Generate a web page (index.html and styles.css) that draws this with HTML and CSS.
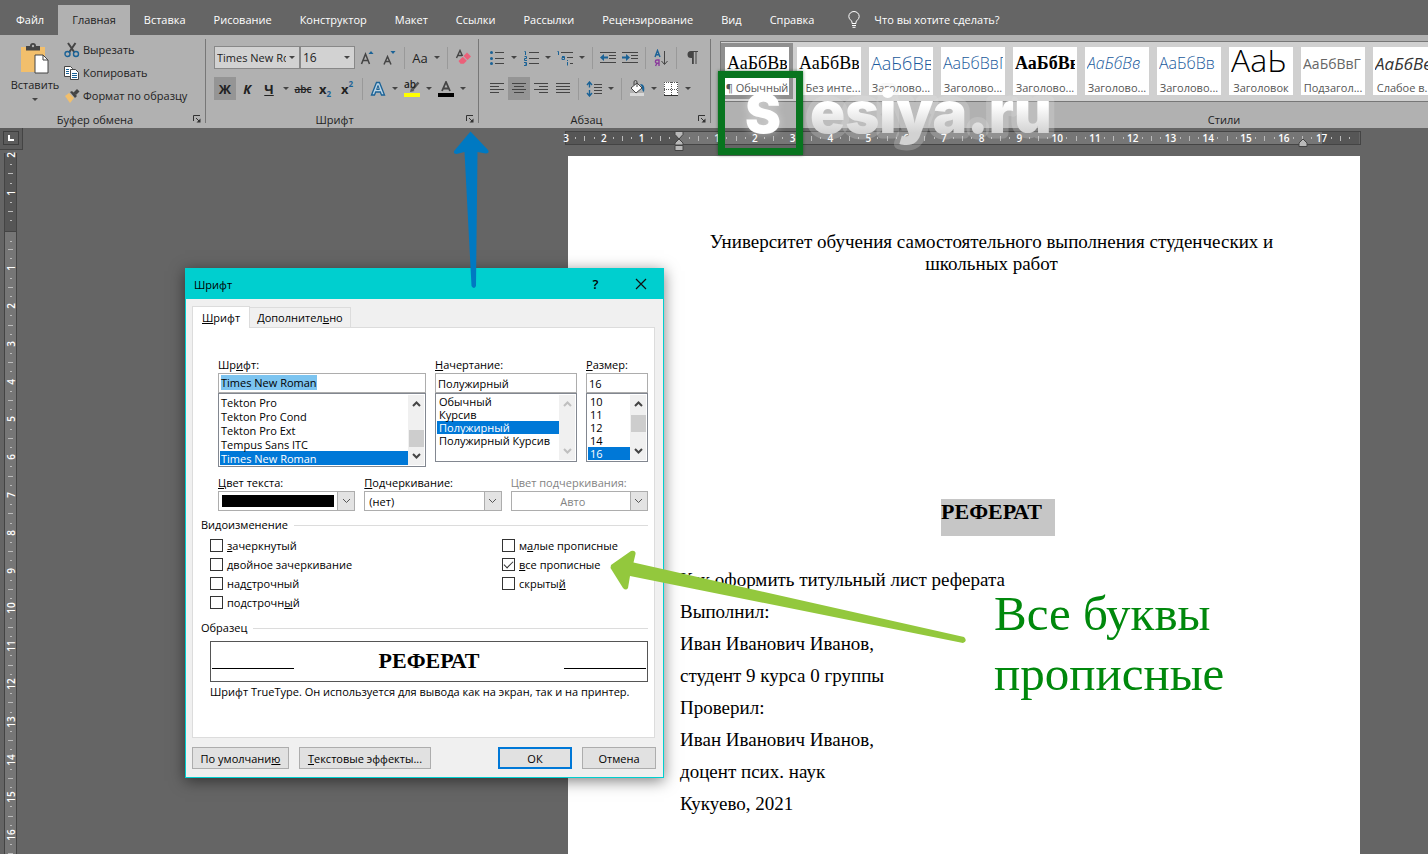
FILE: index.html
```html
<!DOCTYPE html>
<html lang="ru">
<head>
  <meta charset="UTF-8" />
  <meta name="viewport" content="width=device-width, initial-scale=1.0"/>
  <title>Реферат - Word</title>
  <link rel="stylesheet" href="styles.css">
</head>
<body>

  <nav class="tabs">
    <a href="#">Файл</a>
    <a href="#" class="active">Главная</a>
    <a href="#">Вставка</a>
    <a href="#">Рисование</a>
    <a href="#">Конструктор</a>
    <a href="#">Макет</a>
    <a href="#">Ссылки</a>
    <a href="#">Рассылки</a>
    <a href="#">Рецензирование</a>
    <a href="#">Вид</a>
    <a href="#">Справка</a>
    <a href="#" class="tell-me">
      <svg width="12" height="17" viewBox="0 0 12 17" fill="none" stroke="#fff"><path d="M4 12.500V11C4 9.500 .8 8.500 .8 5.500a5.200 5 0 0 1 10.400 0C11.200 8.500 8 9.500 8 11v1.500zM4 14.500h4M4.500 16.300h3"/></svg>
      Что вы хотите сделать?
    </a>
  </nav>

  <div class="ribbon">
    <!-- Clipboard -->
    <section class="group clipboard">
      <div class="group-body">
        <button class="paste">
          <svg width="30" height="32" viewBox="0 0 30 32"><path d="M1 4h24v25H1z" fill="#f2bf6c"/><path d="M6 3h4a3 3 0 0 1 6 0h4v4.500H6z" fill="#444"/><circle cx="13" cy="3" r="1.200" fill="#b1b1b1"/><path d="M15 12h8l5 5v13H15z" fill="#fff" stroke="#444"/><path d="M23 12v5h5" fill="none" stroke="#444"/></svg>
          <span>Вставить</span>
          <i class="caret"></i>
        </button>
        <div class="clip-actions">
          <button>
            <svg width="16" height="16" viewBox="0 0 16 16" fill="none"><path d="M4 1l6.500 9.500M11.500 1L5 10.500" stroke="#444" stroke-width="2"/><circle cx="3.500" cy="12" r="2.500" stroke="#1a6296" stroke-width="1.400"/><circle cx="12" cy="12" r="2.500" stroke="#1a6296" stroke-width="1.400"/></svg>
            Вырезать
          </button>
          <button>
            <svg width="16" height="16" viewBox="0 0 16 16" stroke="#444" fill="#fff"><path d="M.5 1.500h6l2 2v8h-8z"/><path d="M6.500 4.500h5l3 3v7h-8z"/><path d="M2 4.500h3M2 6.500h3M2 8.500h3M8 8.500h5M8 10.500h5M8 12.500h5" stroke="#1a6296"/></svg>
            Копировать
          </button>
          <button>
            <svg width="16" height="16" viewBox="0 0 16 16"><path d="M5 5l5 5-4 5-5-7z" fill="#f2bf6c"/><path d="M6 4l2-1 5 5-2 2z" fill="#444"/><path d="M9 5l4-4 2.500 2.500L12 7z" fill="#444"/></svg>
            Формат по образцу
          </button>
        </div>
      </div>
      <div class="group-label">Буфер обмена
        <button class="launcher" aria-label="Буфер обмена"><svg width="8" height="8" viewBox="0 0 8 8" fill="none" stroke="#333"><path d="M.5 6V.5H7M3 3l3 3"/><path d="M7.500 3.500v4h-4z" fill="#333" stroke="none"/></svg></button>
      </div>
    </section>

    <!-- Font -->
    <section class="group font">
      <div class="tool-row">
        <div class="box box-name"><select aria-label="Имя шрифта"><option>Times New Roman</option></select><i class="caret"></i></div>
        <div class="box box-size"><select aria-label="Кегль"><option>16</option></select><i class="caret"></i></div>
        <button class="tool" aria-label="Увеличить размер"><svg width="16" height="18" viewBox="0 0 16 18"><path d="M2.500 15L6.500 5l4 10M4 11.500h5" fill="none" stroke="#444" stroke-width="1.500"/><path d="M9.500 5L12 2l2.500 3z" fill="#1a6296"/></svg></button>
        <button class="tool" aria-label="Уменьшить размер"><svg width="16" height="18" viewBox="0 0 16 18"><path d="M3 15.500l3.500-8 3.500 8M4.500 12.500h4" fill="none" stroke="#444" stroke-width="1.500"/><path d="M9.500 2h5L12 5z" fill="#1a6296"/></svg></button>
        <i class="sep"></i>
        <button class="tool case">Aa</button>
        <button class="drop" aria-label="Регистр"><i class="caret"></i></button>
        <i class="sep"></i>
        <button class="tool" aria-label="Удалить форматирование"><svg width="16" height="17" viewBox="0 0 16 17"><path d="M1.500 9L5 1.500 7.500 7M3 6.500h4" fill="none" stroke="#444" stroke-width="1.400"/><path d="M8.500 7L12 3.500l4 4-3.500 3.500z" fill="#eb6079"/><path d="M7.800 7.800l4 4-3 3H5.500L3.500 12z" fill="#eb6079"/></svg></button>
      </div>
      <div class="tool-row">
        <button class="tool on bold">Ж</button>
        <button class="tool italic">К</button>
        <button class="tool under">Ч</button>
        <button class="drop" aria-label="Подчеркнутый"><i class="caret"></i></button>
        <button class="tool strike">abc</button>
        <button class="tool script">x<sub>2</sub></button>
        <button class="tool script">x<sup>2</sup></button>
        <i class="sep"></i>
        <button class="tool" aria-label="Текстовые эффекты"><svg width="16" height="16" viewBox="0 0 16 16"><path d="M1.500 14L6.500 1.500h3l5 12.500h-3l-1.200-3H5.700L4.500 14z" fill="#b9d3e4" stroke="#1a6296" stroke-width="1.300"/><path d="M6.600 8.500L8 4.500l1.400 4z" fill="#b1b1b1" stroke="#1a6296"/></svg></button>
        <button class="drop" aria-label="Эффекты"><i class="caret"></i></button>
        <button class="tool marker" aria-label="Цвет выделения"><span>ab</span><svg width="16" height="16" viewBox="0 0 16 16"><path d="M0 12h16v4H0z" fill="#ff0"/><path d="M14.500 1.500l-6 7" stroke="#555" stroke-width="2.500"/><path d="M6 11l1-4 3.500 3z" fill="#555"/></svg></button>
        <button class="drop" aria-label="Выделение"><i class="caret"></i></button>
        <button class="tool" aria-label="Цвет шрифта"><svg width="16" height="16" viewBox="0 0 16 16"><path d="M4 10L8 1l4 9M5.500 7.500h5" fill="none" stroke="#444" stroke-width="1.800"/><path d="M0 12h16v4H0z"/></svg></button>
        <button class="drop" aria-label="Цвет"><i class="caret"></i></button>
      </div>
      <div class="group-label">Шрифт
        <button class="launcher" aria-label="Шрифт"><svg width="8" height="8" viewBox="0 0 8 8" fill="none" stroke="#333"><path d="M.5 6V.5H7M3 3l3 3"/><path d="M7.500 3.500v4h-4z" fill="#333" stroke="none"/></svg></button>
      </div>
    </section>

    <!-- Paragraph -->
    <section class="group paragraph">
      <div class="tool-row">
        <button class="tool" aria-label="Маркеры"><svg width="16" height="16" viewBox="0 0 16 16"><path d="M6 2.500h9M6 8.500h9M6 13.500h9" stroke="#444"/><circle cx="2.500" cy="2.500" r="1.500" fill="#1a6296"/><circle cx="2.500" cy="8.500" r="1.500" fill="#1a6296"/><circle cx="2.500" cy="13.500" r="1.500" fill="#1a6296"/></svg></button>
        <button class="drop" aria-label="Библиотека маркеров"><i class="caret"></i></button>
        <button class="tool" aria-label="Нумерация"><svg width="16" height="16" viewBox="0 0 16 16" fill="none"><path d="M6 2.500h10M6 8.500h10M6 13.500h10" stroke="#444"/><path d="M1.500 1.500h1V5M1.500 6.500h2v2h-2v2h2.500M1 12.500h2.500v3H1M2 14h1.500" stroke="#1a6296"/></svg></button>
        <button class="drop" aria-label="Формат номера"><i class="caret"></i></button>
        <button class="tool" aria-label="Многоуровневый список"><svg width="16" height="16" viewBox="0 0 16 16" fill="none"><path d="M4 2.500h12M10 7.500h6M13 13.500h3" stroke="#444"/><path d="M.5 1.500h1V5M5 6.500h2.500v3H5v-2h2M10.500 12v3.500M10.500 10v1" stroke="#1a6296"/></svg></button>
        <button class="drop" aria-label="Уровни списка"><i class="caret"></i></button>
        <i class="sep"></i>
        <button class="tool" aria-label="Уменьшить отступ"><svg width="16" height="16" viewBox="0 0 16 16"><path d="M0 2.500h16M9 5.500h7M9 8.500h7M0 12.500h16" stroke="#444"/><path d="M0 7.500L4 4v2.500h4v2H4V11z" fill="#1a6296"/></svg></button>
        <button class="tool" aria-label="Увеличить отступ"><svg width="16" height="16" viewBox="0 0 16 16"><path d="M0 2.500h16M9 5.500h7M9 8.500h7M0 12.500h16" stroke="#444"/><path d="M8 7.500L4 4v2.500H0v2h4V11z" fill="#1a6296"/></svg></button>
        <i class="sep"></i>
        <button class="tool" aria-label="Сортировка"><svg width="16" height="18" viewBox="0 0 16 18" fill="none"><path d="M2 8l2.500-6.500L7 8M3 5.800h3" stroke="#1a6296" stroke-width="1.400"/><path d="M6 17v-6H4a1.500 1.500 0 0 0 0 3.200h2M4.200 14L2.500 17" stroke="#8a3a9c" stroke-width="1.400"/><path d="M11.500 2v13M8.500 12l3 3.500 3-3.500" stroke="#444"/></svg></button>
        <i class="sep"></i>
        <button class="tool" aria-label="Отобразить все знаки"><svg width="14" height="15" viewBox="0 0 14 15"><path d="M7 8H6a3.500 3.500 0 0 1 0-7h7v1h-1.500v12h-1V2h-1.700v12H7z" fill="#444"/></svg></button>
      </div>
      <div class="tool-row">
        <button class="tool" aria-label="По левому краю"><svg width="16" height="14" viewBox="0 0 16 14" stroke="#444"><path d="M1 1.500h14M1 4.500h9M1 7.500h14M1 10.500h9"/></svg></button>
        <button class="tool on" aria-label="По центру"><svg width="16" height="14" viewBox="0 0 16 14" stroke="#444"><path d="M1 1.500h14M3 4.500h10M1 7.500h14M3 10.500h10"/></svg></button>
        <button class="tool" aria-label="По правому краю"><svg width="16" height="14" viewBox="0 0 16 14" stroke="#444"><path d="M1 1.500h14M6 4.500h9M1 7.500h14M6 10.500h9"/></svg></button>
        <button class="tool" aria-label="По ширине"><svg width="16" height="14" viewBox="0 0 16 14" stroke="#444"><path d="M1 1.500h14M1 4.500h14M1 7.500h14M1 10.500h14"/></svg></button>
        <i class="sep"></i>
        <button class="tool" aria-label="Интервал"><svg width="16" height="16" viewBox="0 0 16 16" fill="none"><path d="M8 3.500h8M8 6.500h8M8 9.500h8M8 12.500h8" stroke="#444"/><path d="M3.500 1.500v5M1 4l2.500-3L6 4M3.500 9v5M1 12l2.500 3L6 12" stroke="#1a6296" stroke-width="1.400"/></svg></button>
        <button class="drop" aria-label="Междустрочный интервал"><i class="caret"></i></button>
        <i class="sep"></i>
        <button class="tool" aria-label="Заливка"><svg width="18" height="17" viewBox="0 0 18 17"><path d="M2 13h14v3H2z" fill="#d9d9d9"/><path d="M3 8l6-5 5 5-6 5z" fill="#fff" stroke="#444"/><path d="M6 5V2a1.500 1.500 0 0 1 3 0v5" fill="none" stroke="#444"/><path d="M12 4c4 0 5 3 4 8-2-1-2-3-2-5z" fill="#1a6296"/></svg></button>
        <button class="drop" aria-label="Цвет заливки"><i class="caret"></i></button>
        <button class="tool" aria-label="Границы"><svg width="14" height="14" viewBox="0 0 14 14"><path d="M0 0h14v14H0z" fill="#fff"/><path d="M0 .5h14M0 7.500h14M.5 0v14M7.500 0v14M13.500 0v12" stroke="#555" stroke-dasharray="1 1" fill="none"/><path d="M0 13.500h14" stroke="#333"/></svg></button>
        <button class="drop" aria-label="Виды границ"><i class="caret"></i></button>
      </div>
      <div class="group-label">Абзац
        <button class="launcher" aria-label="Абзац"><svg width="8" height="8" viewBox="0 0 8 8" fill="none" stroke="#333"><path d="M.5 6V.5H7M3 3l3 3"/><path d="M7.500 3.500v4h-4z" fill="#333" stroke="none"/></svg></button>
      </div>
    </section>

    <!-- Styles -->
    <section class="group styles">
      <div class="gallery">
        <button class="style selected"><span class="sample serif">АаБбВв</span><span class="name">¶ Обычный</span></button>
        <button class="style"><span class="sample serif">АаБбВв</span><span class="name shifted">Без инте...</span></button>
        <button class="style"><span class="sample light large">АаБбВв</span><span class="name">Заголово...</span></button>
        <button class="style"><span class="sample light">АаБбВвГ</span><span class="name">Заголово...</span></button>
        <button class="style"><span class="sample serif heavy">АаБбВв</span><span class="name">Заголово...</span></button>
        <button class="style"><span class="sample light slanted">АаБбВв</span><span class="name">Заголово...</span></button>
        <button class="style"><span class="sample light">АаБбВв</span><span class="name">Заголово...</span></button>
        <button class="style"><span class="sample title">АаЬ</span><span class="name">Заголовок</span></button>
        <button class="style"><span class="sample subtitle">АаБбВвГ</span><span class="name">Подзагол...</span></button>
        <button class="style"><span class="sample slanted weak">АаБбВв</span><span class="name">Слабое в...</span></button>
      </div>
      <div class="group-label">Стили</div>
    </section>
  </div>

  <main class="workspace">
    <div class="side">
      <div class="corner"><span><svg width="6" height="6" viewBox="0 0 6 6"><path d="M0 0h2v4h4v2H0z" fill="#fff"/></svg></span></div>
      <div class="v-ruler">
        <span><b>2</b></span><span><b>1</b></span><span class="zero"></span><span><b>1</b></span><span><b>2</b></span><span><b>3</b></span><span><b>4</b></span><span><b>5</b></span><span><b>6</b></span><span><b>7</b></span><span><b>8</b></span><span><b>9</b></span><span><b>10</b></span><span><b>11</b></span><span><b>12</b></span><span><b>13</b></span><span><b>14</b></span><span><b>15</b></span><span><b>16</b></span>
      </div>
    </div>

    <div class="canvas">
      <div class="h-ruler">
        <span><b>3</b></span><span><b>2</b></span><span><b>1</b></span><span><svg class="indent" width="10" height="22" viewBox="0 0 10 22" fill="#b9b9b9" stroke="#444"><path d="M1 1.500h8v3L5 9 1 4.500zM5 9l4 4v2H1v-2zM1 15.500h8v5H1z"/></svg></span><span><b>1</b></span><span><b>2</b></span><span><b>3</b></span><span><b>4</b></span><span><b>5</b></span><span><b>6</b></span><span><b>7</b></span><span><b>8</b></span><span><b>9</b></span><span><b>10</b></span><span><b>11</b></span><span><b>12</b></span><span><b>13</b></span><span><b>14</b></span><span><b>15</b></span><span><b>16</b><svg class="indent-right" width="10" height="9" viewBox="0 0 10 9"><path d="M5 1l4 4v3.500H1V5z" fill="#b9b9b9" stroke="#444"/></svg></span><span><b>17</b></span>
      </div>
      <article class="page">
        <p class="center">Университет обучения самостоятельного выполнения студенческих и школьных работ</p>
        <h1><mark>РЕФЕРАТ</mark></h1>
        <p>Как оформить титульный лист реферата</p>
        <p>Выполнил:</p>
        <p>Иван Иванович Иванов,</p>
        <p>студент 9 курса 0 группы</p>
        <p>Проверил:</p>
        <p>Иван Иванович Иванов,</p>
        <p>доцент псих. наук</p>
        <p>Кукуево, 2021</p>
      </article>
    </div>

    <!-- Font dialog -->
    <div class="dialog" role="dialog" aria-labelledby="dialog-title">
      <div class="title-bar">
        <span id="dialog-title">Шрифт</span>
        <button class="help">?</button>
        <button aria-label="Закрыть"><svg width="12" height="12" viewBox="0 0 12 12" stroke="#111" stroke-width="1.200"><path d="M1 1l10 10M11 1L1 11"/></svg></button>
      </div>
      <div class="dialog-tabs">
        <button class="current"><u>Ш</u>рифт</button>
        <button>Дополнител<u>ь</u>но</button>
      </div>
      <div class="panel">
        <div class="indented pickers">
          <div class="picker">
            <label for="f-name">Шр<u>и</u>фт:</label>
            <div class="field"><mark>Times New Roman</mark></div>
            <div class="list tall">
              <select id="f-name" size="5">
                <option>Tekton Pro</option>
                <option>Tekton Pro Cond</option>
                <option>Tekton Pro Ext</option>
                <option>Tempus Sans ITC</option>
                <option selected>Times New Roman</option>
              </select>
              <div class="scroll low"><svg width="9" height="6" viewBox="0 0 9 6"><path d="M1 5l3.500-3.500L8 5"/></svg><i></i><svg width="9" height="6" viewBox="0 0 9 6"><path d="M1 1l3.500 3.500L8 1"/></svg></div>
            </div>
          </div>
          <div class="picker">
            <label for="f-style"><u>Н</u>ачертание:</label>
            <input class="field" type="text" value="Полужирный" aria-label="Начертание">
            <div class="list">
              <select id="f-style" size="5">
                <option>Обычный</option>
                <option>Курсив</option>
                <option selected>Полужирный</option>
                <option>Полужирный Курсив</option>
              </select>
              <div class="scroll off"><svg width="9" height="6" viewBox="0 0 9 6"><path d="M1 5l3.500-3.500L8 5"/></svg><svg width="9" height="6" viewBox="0 0 9 6"><path d="M1 1l3.500 3.500L8 1"/></svg></div>
            </div>
          </div>
          <div class="picker">
            <label for="f-size"><u>Р</u>азмер:</label>
            <input class="field" type="text" value="16" aria-label="Размер">
            <div class="list">
              <select id="f-size" size="5">
                <option>10</option>
                <option>11</option>
                <option>12</option>
                <option>14</option>
                <option selected>16</option>
              </select>
              <div class="scroll high"><svg width="9" height="6" viewBox="0 0 9 6"><path d="M1 5l3.500-3.500L8 5"/></svg><i></i><svg width="9" height="6" viewBox="0 0 9 6"><path d="M1 1l3.500 3.500L8 1"/></svg></div>
            </div>
          </div>
        </div>

        <div class="indented combos">
          <div class="picker">
            <label for="c-color"><u>Ц</u>вет текста:</label>
            <div class="combo"><select id="c-color" class="swatch"><option label=" "></option></select><span class="arrow"><svg width="9" height="6" viewBox="0 0 9 6"><path d="M1 1l3.500 3.500L8 1"/></svg></span></div>
          </div>
          <div class="picker">
            <label for="c-under"><u>П</u>одчеркивание:</label>
            <div class="combo"><select id="c-under"><option>(нет)</option></select><span class="arrow"><svg width="9" height="6" viewBox="0 0 9 6"><path d="M1 1l3.500 3.500L8 1"/></svg></span></div>
          </div>
          <div class="picker disabled">
            <label for="c-ucolor">Цвет подчеркивания:</label>
            <div class="combo"><select id="c-ucolor" disabled><option>Авто</option></select><span class="arrow"><svg width="9" height="6" viewBox="0 0 9 6"><path d="M1 1l3.500 3.500L8 1"/></svg></span></div>
          </div>
        </div>

        <h2>Видоизменение</h2>
        <div class="effects">
          <label><input type="checkbox"><span><u>з</u>ачеркнутый</span></label>
          <label><input type="checkbox"><span>м<u>а</u>лые прописные</span></label>
          <label><input type="checkbox"><span><u>д</u>войное зачеркивание</span></label>
          <label><input type="checkbox" checked><span><u>в</u>се прописные</span></label>
          <label><input type="checkbox"><span>над<u>с</u>трочный</span></label>
          <label><input type="checkbox"><span>скрыты<u>й</u></span></label>
          <label><input type="checkbox"><span>подстрочн<u>ы</u>й</span></label>
        </div>

        <h2 class="second">Образец</h2>
        <div class="preview"><i></i><b>РЕФЕРАТ</b><i></i></div>
        <p class="hint">Шрифт TrueType. Он используется для вывода как на экран, так и на принтер.</p>
      </div>
      <div class="dialog-buttons">
        <button class="w-default">По умолчани<u>ю</u></button>
        <button class="w-effects"><u>Т</u>екстовые эффекты...</button>
        <button class="w-ok">ОК</button>
        <button class="w-cancel">Отмена</button>
      </div>
    </div>

    <!-- Callouts over the document -->
    <svg class="arrow-blue" width="40" height="162" viewBox="0 0 40 162"><path d="M18.500 2.500L36 21q2 3-2 3.500L25.500 23 24 157q-2 4-4.500 0L12.500 23 4.500 25q-4-.5-2-3.500z" fill="#0079c2"/></svg>
    <svg class="arrow-green" width="362" height="106" viewBox="0 0 362 106"><path d="M3 25L23 11q5-1 4.500 3L25.500 22.500 356 97q4 4-1 6L22 36 20 48q-2 3-5 0L2.500 28z" fill="#93c83d"/></svg>
    <p class="callout">Все буквы<br>прописные</p>
  </main>

  <div class="watermark">
    <div class="frame">S</div>
    <svg width="270" height="80" viewBox="0 0 270 80">
      <defs><linearGradient id="silver" x1="0" y1="0" x2="0" y2="1"><stop offset="0.400" stop-color="#fff"/><stop offset="0.800" stop-color="#d2d2d2"/></linearGradient></defs>
      <text x="7" y="50" fill="url(#silver)">esiya.ru</text>
    </svg>
  </div>

</body>
</html>
```
FILE: styles.css
```css
* {
  margin: 0;
  padding: 0;
  box-sizing: border-box;
}
body {
  height: 100vh;
  display: flex;
  flex-direction: column;
  overflow: hidden;
  position: relative;
  background: #656565;
  color: #222;
  font-family: "Open Sans", "Noto Sans", sans-serif;
  font-size: 11px;
}
button, select, input {
  font: inherit;
  color: inherit;
  background: none;
  border: none;
  border-radius: 0;
  outline: none;
}
svg {
  display: block;
  flex: none;
}

/* tabs */
.tabs {
  display: flex;
  height: 35px;
  padding: 5px 0 0 2px;
  flex: none;
}
.tabs a {
  display: flex;
  align-items: center;
  padding: 0 14px 1px;
  color: #fff;
  text-decoration: none;
  white-space: nowrap;
}
.tabs .active {
  background: #b1b1b1;
  color: #222;
}
.tabs .tell-me {
  gap: 14px;
  margin-left: 6px;
}

/* ribbon */
.ribbon {
  display: flex;
  height: 93px;
  flex: none;
  background: #b1b1b1;
}
.group {
  display: flex;
  flex-direction: column;
  flex: none;
  position: relative;
  padding-top: 11px;
}
.group::after {
  content: "";
  position: absolute;
  top: 4px;
  right: 0;
  bottom: 5px;
  width: 1px;
  background: #777;
}
.clipboard {
  width: 206px;
  padding-top: 3px;
}
.font {
  width: 273px;
  padding-left: 8px;
}
.paragraph {
  width: 232px;
  padding-left: 7px;
}
.styles {
  flex: 1;
  min-width: 0;
  padding: 6px 0 0 9px;
}
.styles::after {
  display: none;
}
.group-label {
  display: flex;
  align-items: center;
  justify-content: center;
  height: 18px;
  margin-top: auto;
  padding-right: 24px;
  position: relative;
}
.clipboard .group-label {
  padding-right: 16px;
}
.styles .group-label {
  padding-right: 0;
  padding-left: 300px;
}
.launcher {
  position: absolute;
  right: 5px;
  top: 5px;
}
.group-body {
  display: flex;
}
.paste {
  display: flex;
  flex-direction: column;
  align-items: center;
  width: 58px;
  margin-left: 6px;
  padding-top: 5px;
}
.paste span {
  line-height: 20px;
}
.paste .caret {
  margin-top: 3px;
}
.clip-actions {
  display: flex;
  flex-direction: column;
}
.clip-actions button {
  display: flex;
  align-items: center;
  gap: 3px;
  height: 23px;
  white-space: nowrap;
}
.caret {
  border: 3px solid transparent;
  border-top-color: #444;
  border-bottom: none;
  flex: none;
}
.tool-row {
  display: flex;
  align-items: center;
  height: 23px;
  margin-bottom: 8px;
}
.tool {
  display: flex;
  align-items: center;
  justify-content: center;
  width: 22px;
  height: 23px;
  flex: none;
}
.tool.on {
  background: #959595;
}
.drop {
  display: flex;
  justify-content: center;
  width: 12px;
  flex: none;
}
.sep {
  width: 1px;
  height: 22px;
  margin: 0 4px;
  background: #999;
}
.box {
  display: flex;
  align-items: center;
  height: 23px;
  padding-right: 4px;
  border: 1px solid #888;
  background: #d2d2d2;
}
.box select {
  appearance: none;
  flex: 1;
  min-width: 0;
  padding-left: 2px;
  margin-right: 3px;
  overflow: hidden;
}
.box-name {
  width: 86px;
}
.box-size {
  width: 55px;
  margin-right: 1px;
}
.box-size select {
  font-size: 12px;
}
.case {
  font-size: 13px;
}
.bold, .italic, .under {
  font-size: 13px;
  font-weight: 700;
}
.italic {
  font-style: italic;
}
.under {
  text-decoration: underline;
}
.strike {
  font-size: 10px;
  font-weight: 600;
  text-decoration: line-through;
}
.script {
  font-size: 13px;
  font-weight: 700;
}
.script sub, .script sup {
  font-size: 8px;
  color: #1a6296;
}
.script sub {
  padding-top: 10px;
}
.script sup {
  padding-bottom: 10px;
}
.marker {
  position: relative;
}
.marker span {
  position: absolute;
  left: 3px;
  top: 0;
  font-size: 10px;
  font-weight: 600;
}

/* styles gallery */
.gallery {
  display: flex;
  gap: 8px;
  height: 61px;
  padding: 5px 4px 0;
  border: 1px solid #777;
  border-right: none;
  background: #d0d0d0;
  overflow: hidden;
}
.style {
  display: flex;
  flex-direction: column;
  align-items: center;
  width: 64px;
  height: 48px;
  flex: none;
  background: #fff;
  overflow: hidden;
}
.style.selected {
  box-shadow: 0 0 0 4px #8f8f8f;
}
.sample {
  display: flex;
  align-items: center;
  width: 60px;
  height: 32px;
  flex: none;
  overflow: hidden;
  font-size: 17px;
  white-space: nowrap;
}
.name {
  width: 100%;
  line-height: 18px;
  color: #555;
  text-align: center;
  white-space: nowrap;
}
.shifted {
  padding-left: 8px;
}
.serif {
  font-family: "Liberation Serif", serif;
  font-size: 18px;
  color: #000;
}
.heavy {
  font-weight: 700;
}
.light {
  font-weight: 300;
  font-size: 16px;
  color: #1a5a9c;
}
.large {
  font-size: 18px;
}
.slanted {
  font-style: italic;
}
.title {
  font-size: 32px;
  font-weight: 300;
  line-height: 26px;
  color: #000;
  padding-bottom: 6px;
}
.subtitle {
  font-size: 14px;
  color: #666;
}
.weak {
  font-size: 17px;
  color: #333;
}

/* workspace */
.workspace {
  display: flex;
  flex: 1;
  min-height: 0;
  position: relative;
}
.side {
  width: 23px;
  flex: none;
  overflow: hidden;
}
.corner {
  height: 22px;
  padding: 3px;
  border: 1px solid #444;
  border-top: none;
  border-left: none;
  background: #5c5c5c;
}
.corner span {
  display: flex;
  align-items: center;
  justify-content: center;
  width: 16px;
  height: 14px;
  border: 1px solid #3e3e3e;
}
.v-ruler {
  width: 13px;
  margin: 3px 0 0 4px;
  padding-top: 2px;
  border: 1px solid #444;
  border-width: 0 1px;
  background: #565656;
}
.v-ruler span, .h-ruler span {
  display: flex;
  color: #fff;
  font-size: 10px;
  line-height: 12px;
}
.v-ruler span {
  height: 1cm;
  background:
    linear-gradient(#bbb, #bbb) 50% 25% / 2px 1px no-repeat,
    linear-gradient(#bbb, #bbb) 50% 50% / 5px 1px no-repeat,
    linear-gradient(#bbb, #bbb) 50% 75% / 2px 1px no-repeat,
    #767676;
}
.v-ruler span:nth-child(-n+2) {
  background-color: #565656;
}
.v-ruler .zero {
  border-top: 1px solid #444;
}
.v-ruler b {
  display: flex;
  align-items: center;
  justify-content: center;
  width: 11px;
  height: 0;
  font-weight: 600;
  transform: rotate(-90deg);
}
.canvas {
  display: flex;
  flex-direction: column;
  padding: 4px 0 0 543px;
}
.h-ruler {
  display: flex;
  width: 21cm;
  height: 12px;
  flex: none;
  outline: 1px solid #444;
}
.h-ruler span {
  align-items: center;
  position: relative;
  width: 1cm;
  background:
    linear-gradient(#bbb, #bbb) 25% 50% / 1px 2px no-repeat,
    linear-gradient(#bbb, #bbb) 50% 50% / 1px 5px no-repeat,
    linear-gradient(#bbb, #bbb) 75% 50% / 1px 2px no-repeat,
    #767676;
}
.h-ruler span:nth-child(-n+3), .h-ruler span:last-child {
  background-color: #565656;
}
.h-ruler b {
  display: flex;
  justify-content: center;
  width: 0;
  font-weight: 600;
}
.indent {
  position: absolute;
  left: -5px;
  top: -2px;
}
.indent-right {
  position: absolute;
  right: 14px;
  top: 6px;
}
.page {
  flex: 1;
  width: 792px;
  min-height: 0;
  margin: 12px 0 0 2px;
  padding: 75px 57px 0 112px;
  background: #fff;
  color: #000;
  font-family: "Liberation Serif", serif;
  font-size: 19px;
  line-height: 32px;
}
.page .center {
  line-height: 22px;
  text-align: center;
}
.page h1 {
  margin: 224px 0 28px;
  font-size: 22px;
  line-height: 26px;
  text-align: center;
}
.page mark {
  display: inline-block;
  padding: 0 13px 11px 0;
  margin-right: -13px;
  background: #c6c6c6;
  vertical-align: top;
}

/* dialog */
.dialog {
  position: absolute;
  left: 185px;
  top: 140px;
  width: 479px;
  border: 1px solid #00cfcf;
  background: #f0f0f0;
  color: #000;
  box-shadow: 0 3px 14px rgba(0, 0, 0, 0.5);
}
.title-bar {
  display: flex;
  align-items: center;
  height: 30px;
  padding-left: 8px;
  background: #00cfcf;
}
.title-bar span {
  flex: 1;
}
.title-bar button {
  display: flex;
  align-items: center;
  justify-content: center;
  width: 45px;
  height: 30px;
}
.title-bar .help {
  font-size: 13px;
  font-weight: 600;
}
.dialog-tabs {
  display: flex;
  align-items: flex-end;
  height: 28px;
  padding: 0 6px;
}
.dialog-tabs button {
  height: 20px;
  padding: 0 7px;
  border: 1px solid #dcdcdc;
  border-left: none;
  border-bottom: none;
}
.dialog-tabs .current {
  height: 22px;
  margin-bottom: -1px;
  padding: 0 9px;
  border-left: 1px solid #dcdcdc;
  background: #fff;
  position: relative;
}
.panel {
  margin: 0 8px 0 6px;
  padding: 29px 6px 37px 8px;
  border: 1px solid #dcdcdc;
  background: #fff;
}
.indented {
  display: grid;
  gap: 9px;
  padding-left: 17px;
}
.pickers {
  grid-template-columns: 208px 1fr 62px;
}
.combos {
  grid-template-columns: 1fr 1fr 1fr;
  margin-top: 8px;
}
.picker {
  min-width: 0;
}
.picker label {
  display: block;
  line-height: 16px;
  white-space: nowrap;
}
.field {
  display: block;
  width: 100%;
  height: 20px;
  padding: 0 2px;
  border: 1px solid #adadad;
  line-height: 18px;
}
.field mark {
  background: #7cc4f0;
}
.list {
  display: flex;
  height: 69px;
  padding: 1px;
  border: 1px solid #828790;
}
.list.tall {
  height: 74px;
}
.list select {
  flex: 1;
  min-width: 0;
  height: 100%;
  overflow: hidden;
}
.list option {
  display: flex;
  align-items: center;
  height: 13px;
  min-height: 0;
  padding: 0 2px;
}
.tall option {
  height: 14px;
  padding: 0 1px;
}
.list option:checked {
  background: linear-gradient(#0078d7, #0078d7);
  -webkit-text-fill-color: #fff;
}
.scroll {
  display: flex;
  flex-direction: column;
  align-items: center;
  justify-content: space-between;
  width: 16px;
  flex: none;
  padding: 6px 0;
  background: #f0f0f0;
}
.scroll path {
  fill: none;
  stroke: #444;
  stroke-width: 2;
}
.scroll.off path {
  stroke: #bfbfbf;
}
.scroll i {
  width: 15px;
  height: 17px;
  background: #cdcdcd;
}
.scroll.low i {
  margin: auto 0 6px;
}
.scroll.high i {
  margin: 8px 0 auto;
}
.combo {
  display: flex;
  height: 20px;
  border: 1px solid #adadad;
}
.combo select {
  appearance: none;
  flex: 1;
  min-width: 0;
  padding-left: 4px;
}
.combo .swatch {
  margin: 3px;
  background: #000;
}
.combo .arrow {
  display: flex;
  align-items: center;
  justify-content: center;
  width: 17px;
  border-left: 1px solid #adadad;
  background: #e3e3e3;
}
.arrow path {
  fill: none;
  stroke: #555;
}
.disabled {
  color: #838383;
}
.disabled select {
  opacity: 1;
  text-align: center;
}
.panel h2 {
  display: flex;
  align-items: center;
  gap: 6px;
  margin: 6px 0 3px;
  font-size: 11px;
  font-weight: 400;
  line-height: 16px;
}
.panel h2::after {
  content: "";
  flex: 1;
  height: 1px;
  background: #dcdcdc;
}
.panel .second {
  margin: 8px 0 5px;
}
.effects {
  display: grid;
  grid-template-columns: 2fr 1fr;
  padding-left: 9px;
}
.effects label {
  display: flex;
  align-items: center;
  gap: 4px;
  height: 19px;
  white-space: nowrap;
}
.effects input {
  appearance: none;
  width: 13px;
  height: 13px;
  border: 1px solid #333;
  background: #fff;
}
.effects input:checked::after {
  content: "";
  display: block;
  width: 8px;
  height: 4px;
  margin: 2px 0 0 1px;
  border: solid #333;
  border-width: 0 0 1px 1px;
  transform: rotate(-45deg);
}
.preview {
  display: flex;
  justify-content: space-between;
  height: 41px;
  margin-left: 9px;
  padding: 0 1px;
  border: 1px solid #555;
}
.preview i {
  width: 82px;
  height: 27px;
  border-bottom: 1px solid #000;
}
.preview b {
  font-family: "Liberation Serif", serif;
  font-size: 22px;
  line-height: 38px;
}
.hint {
  margin: 2px 0 0 9px;
  line-height: 16px;
  white-space: nowrap;
}
.dialog-buttons {
  display: flex;
  gap: 10px;
  padding: 9px 7px 8px 6px;
}
.dialog-buttons button {
  height: 22px;
  border: 1px solid #adadad;
  background: #e1e1e1;
  white-space: nowrap;
}
.dialog-buttons .w-default {
  width: 97px;
}
.dialog-buttons .w-effects {
  width: 132px;
}
.dialog-buttons .w-ok {
  width: 74px;
  margin-left: auto;
  border: 2px solid #0078d7;
}
.dialog-buttons .w-cancel {
  width: 74px;
}

/* callouts */
.arrow-blue {
  position: absolute;
  left: 452px;
  top: 1px;
}
.arrow-green {
  position: absolute;
  left: 608px;
  top: 412px;
}
.callout {
  position: absolute;
  left: 994px;
  top: 456px;
  color: #00880c;
  font-family: "Liberation Serif", serif;
  font-size: 49px;
  line-height: 60px;
}
.watermark {
  display: flex;
  position: absolute;
  left: 718px;
  top: 71px;
  font-family: Inter, sans-serif;
  font-weight: 900;
}
.watermark .frame {
  width: 85px;
  height: 84px;
  padding: 6px 0 0 20px;
  border: 7px solid #08751f;
  box-shadow: 0 0 3px rgba(0, 60, 10, 0.6);
  color: #fff;
  font-size: 54px;
  line-height: 60px;
  text-shadow: 0 0 8px rgba(255, 255, 255, 0.4);
}
.watermark svg {
  margin-top: 12px;
}
.watermark text {
  font-size: 58px;
  stroke: #e4e4e4;
  stroke-opacity: 0.25;
  stroke-width: 11px;
  stroke-linejoin: round;
  paint-order: stroke;
}
```
